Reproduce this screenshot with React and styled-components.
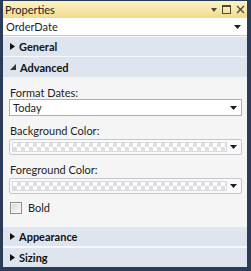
import React from "react";
import styled, { createGlobalStyle } from "styled-components";

const Global = createGlobalStyle`
  html, body { margin: 0; padding: 0; background: #2b3c59; }
  body { font-family: Lato, "Open Sans", sans-serif; }
  * { box-sizing: border-box; }
`;

const Panel = styled.div`
  width: 251px;
  height: 271px;
  display: flex;
  flex-direction: column;
  background: #2b3c59;
  border-style: solid;
  border-color: #2b3c59;
  border-width: 1px 4px 4px 3px;
  overflow: hidden;
`;

const TitleBar = styled.div`
  height: 17px;
  display: flex;
  align-items: center;
  padding: 0 2px 0 2px;
  background: linear-gradient(#fcf2c6, #f8e6a6 55%, #f3da8c);
  font-size: 11px;
  color: #1b1b1b;
`;

const TitleText = styled.span`
  flex: 1;
`;

const TitleButtons = styled.div`
  display: flex;
  align-items: center;
  gap: 5px;
`;

const TopCombo = styled.div`
  height: 18px;
  display: flex;
  align-items: center;
  padding: 0 6px 0 3px;
  background: #ffffff;
  border-bottom: 1px solid #c7ccd6;
  font-size: 11px;
  color: #1e1e1e;
`;

const Grow = styled.span`
  flex: 1;
`;

const SectionHeader = styled.div`
  height: ${(p) => p.$h}px;
  display: flex;
  align-items: center;
  gap: 4px;
  padding-left: 7px;
  background: #dfe5ee;
  border-top: ${(p) => p.$top}px solid #f6f8fb;
  font-size: 11px;
  font-weight: 700;
  color: #111;
`;

const Content = styled.div`
  flex: 1;
  background: #f5f5f5;
  padding: 9px 5px 0 6px;
  display: flex;
  flex-direction: column;
`;

const Label = styled.div`
  height: 13px;
  line-height: 13px;
  font-size: 11px;
  color: #1e1e1e;
  padding-left: 1px;
  margin-top: ${(p) => p.$mt}px;
  margin-bottom: ${(p) => p.$mb}px;
`;

const ComboBox = styled.div`
  height: 17px;
  display: flex;
  align-items: center;
  padding: 0 4px 0 3px;
  background: #fff;
  border: 1px solid #a9afba;
  font-size: 11px;
  color: #1e1e1e;
`;

const ColorBox = styled.div`
  height: 16px;
  display: flex;
  align-items: center;
  padding: 2px 4px 2px 2px;
  gap: 3px;
  background: #f9f9f9;
  border: 1px solid #c3c8d1;
  border-radius: 2px;
`;

const Checker = styled.div`
  flex: 1;
  height: 10px;
  border: 1px solid #d8dbe0;
  background-color: #ffffff;
  background-image:
    linear-gradient(45deg, #dedede 25%, transparent 25%, transparent 75%, #dedede 75%),
    linear-gradient(45deg, #dedede 25%, transparent 25%, transparent 75%, #dedede 75%);
  background-size: 8px 8px;
  background-position: 0 0, 4px 4px;
`;

const CheckRow = styled.label`
  display: flex;
  align-items: center;
  gap: 6px;
  margin-top: 7px;
  padding-left: 1px;
  font-size: 11px;
  color: #1e1e1e;
`;

const CheckBox = styled.span`
  width: 12px;
  height: 12px;
  border: 1px solid #8e8f8f;
  background: linear-gradient(135deg, #d6d6d6, #f2f2f2 70%, #ffffff);
  box-shadow: inset 0 0 0 1px #f4f4f4;
`;

const Arrow = () => (
  <svg width="7" height="4" viewBox="0 0 7 4">
    <path d="M0 0H7L3.5 4Z" fill="#1e1e1e" />
  </svg>
);

const Caret = ({ open }) =>
  open ? (
    <svg width="6" height="6" viewBox="0 0 6 6">
      <path d="M6 0V6H0Z" fill="#333" />
    </svg>
  ) : (
    <svg width="5" height="7" viewBox="0 0 5 7">
      <path d="M0 0L5 3.5L0 7Z" fill="#111" />
    </svg>
  );

const PinIcon = () => (
  <svg width="6" height="4" viewBox="0 0 6 4">
    <path d="M0 0H6L3 4Z" fill="#4a4a40" />
  </svg>
);

const MaxIcon = () => (
  <svg width="9" height="9" viewBox="0 0 9 9">
    <rect x="0.5" y="0.5" width="8" height="8" fill="none" stroke="#4a4a40" />
    <rect x="0.5" y="0.5" width="8" height="1.5" fill="#4a4a40" />
  </svg>
);

const CloseIcon = () => (
  <svg width="9" height="9" viewBox="0 0 9 9">
    <path d="M1 1L8 8M8 1L1 8" stroke="#4a4a40" strokeWidth="1.4" />
  </svg>
);

const Section = ({ title, open, h = 19, top = 1 }) => (
  <SectionHeader $h={h} $top={top}>
    <Caret open={open} />
    <span>{title}</span>
  </SectionHeader>
);

export default function App() {
  return (
    <>
      <Global />
      <Panel>
        <TitleBar>
          <TitleText>Properties</TitleText>
          <TitleButtons>
            <PinIcon />
            <MaxIcon />
            <CloseIcon />
          </TitleButtons>
        </TitleBar>
        <TopCombo>
          <Grow>OrderDate</Grow>
          <Arrow />
        </TopCombo>
        <Section title="General" h={20} top={1} />
        <Section title="Advanced" open h={21} top={1} />
        <Content>
          <Label $mt={0} $mb={0}>Format Dates:</Label>
          <ComboBox>
            <Grow>Today</Grow>
            <Arrow />
          </ComboBox>
          <Label $mt={8} $mb={2}>Background Color:</Label>
          <ColorBox>
            <Checker />
            <Arrow />
          </ColorBox>
          <Label $mt={8} $mb={2}>Foreground Color:</Label>
          <ColorBox>
            <Checker />
            <Arrow />
          </ColorBox>
          <CheckRow>
            <CheckBox />
            <span>Bold</span>
          </CheckRow>
        </Content>
        <Section title="Appearance" h={20} top={1} />
        <Section title="Sizing" h={21} top={2} />
      </Panel>
    </>
  );
}
